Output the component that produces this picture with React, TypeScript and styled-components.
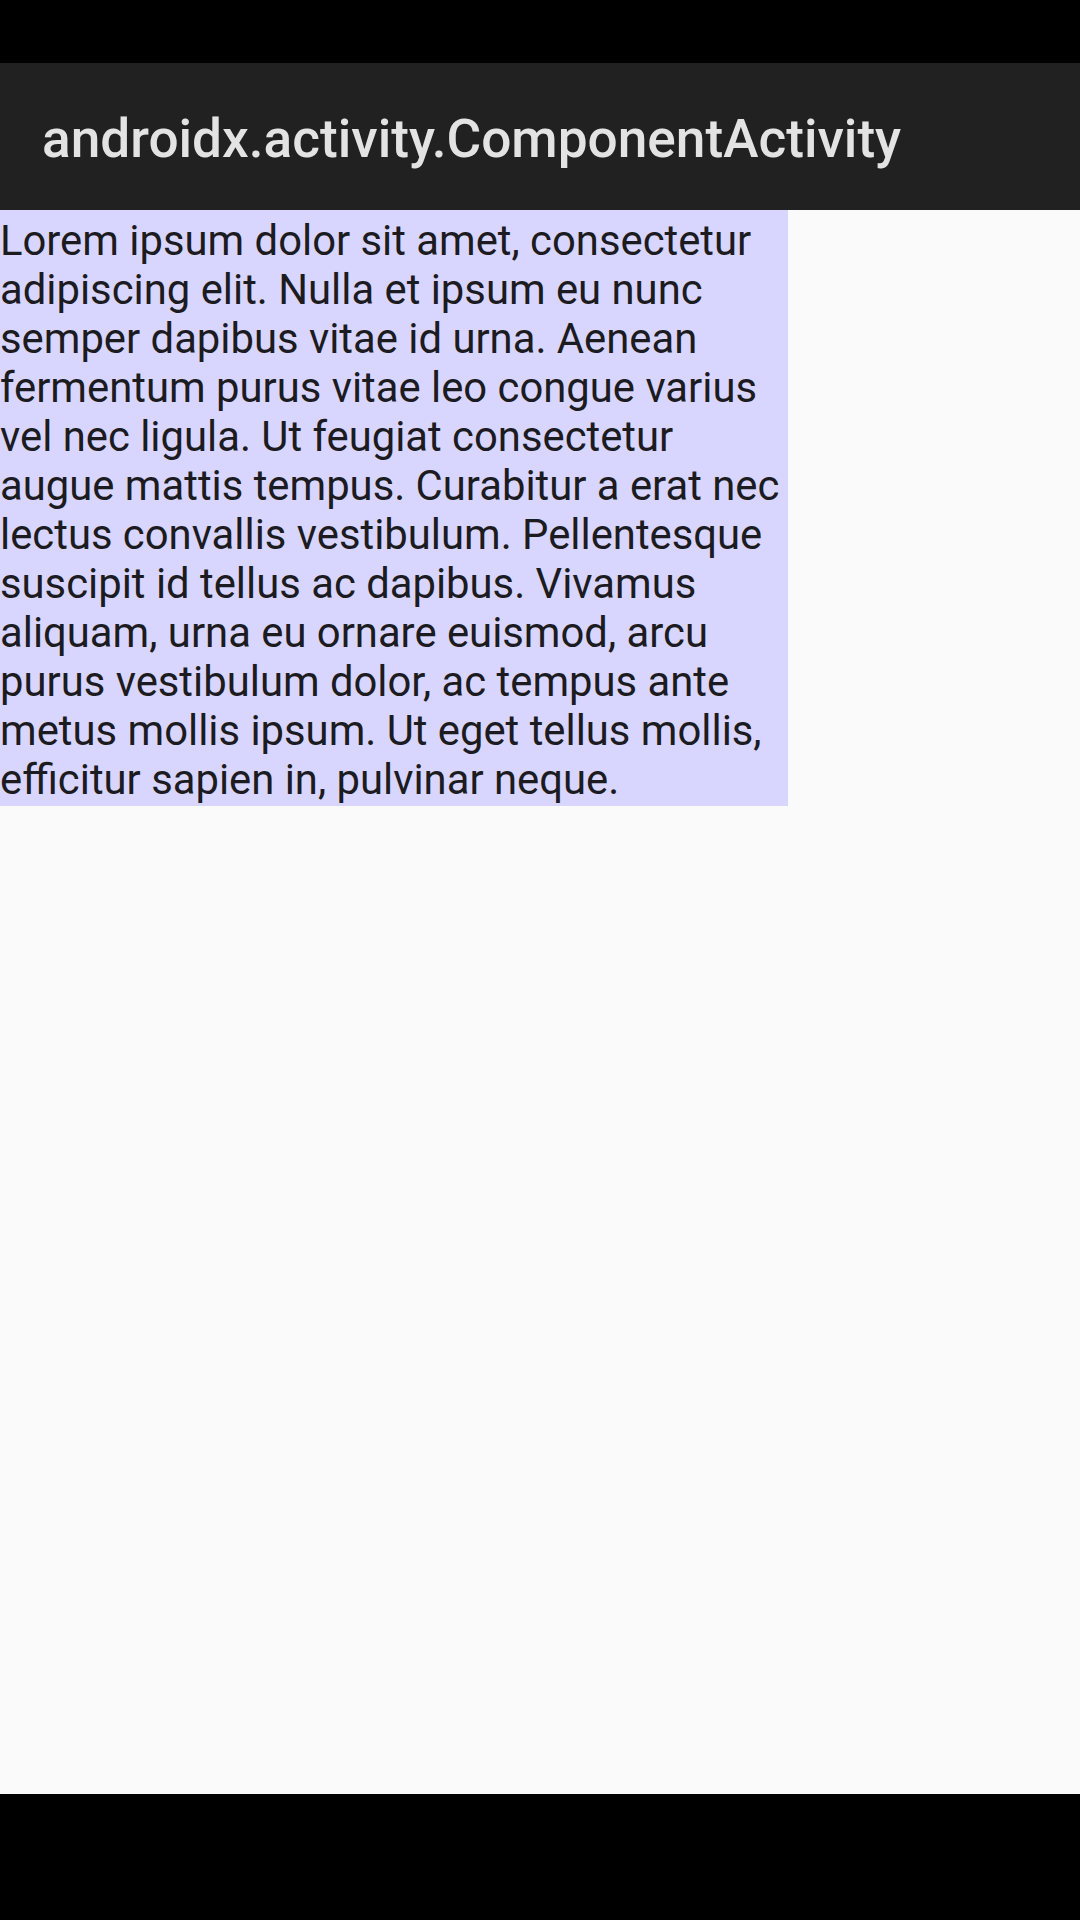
import React from "react";
import styled, { createGlobalStyle } from "styled-components";

const GlobalStyle = createGlobalStyle`
  html, body {
    margin: 0;
    padding: 0;
    background: #000;
  }
  #root {
    width: 1080px;
    height: 1920px;
  }
`;

const LOREM =
  "Lorem ipsum dolor sit amet, consectetur adipiscing elit. Nulla et ipsum eu nunc semper dapibus vitae id urna. Aenean fermentum purus vitae leo congue varius vel nec ligula. Ut feugiat consectetur augue mattis tempus. Curabitur a erat nec lectus convallis vestibulum. Pellentesque suscipit id tellus ac dapibus. Vivamus aliquam, urna eu ornare euismod, arcu purus vestibulum dolor, ac tempus ante metus mollis ipsum. Ut eget tellus mollis, efficitur sapien in, pulvinar neque.";

export default function App() {
  return (
    <Screen>
      <GlobalStyle />
      <StatusBar />
      <Toolbar>
        <Title>androidx.activity.ComponentActivity</Title>
      </Toolbar>
      <Content>
        <TextBlock>{LOREM}</TextBlock>
      </Content>
      <NavBar />
    </Screen>
  );
}

const Screen = styled.div`
  display: flex;
  flex-direction: column;
  width: 1080px;
  height: 1920px;
  font-family: Roboto, "Liberation Sans", sans-serif;
`;

const StatusBar = styled.div`
  height: 63px;
  background: #000;
  flex-shrink: 0;
`;

const Toolbar = styled.div`
  height: 147px;
  flex-shrink: 0;
  box-sizing: border-box;
  display: flex;
  align-items: center;
  padding: 5px 42px 0;
  background: #212121;
`;

const Title = styled.h1`
  margin: 0;
  font-size: 53.2px;
  font-weight: 500;
  color: #e3e3e3;
  white-space: nowrap;
`;

const Content = styled.main`
  flex: 1;
  display: flex;
  align-items: flex-start;
  background: #fafafa;
`;

const TextBlock = styled.p`
  margin: 0;
  width: 788px;
  box-sizing: border-box;
  padding: 6px 0 2px;
  font-size: 41.8px;
  line-height: 49px;
  color: #1c1b1f;
  background: #d8d6fe;
`;

const NavBar = styled.div`
  height: 126px;
  flex-shrink: 0;
  background: #000;
`;
